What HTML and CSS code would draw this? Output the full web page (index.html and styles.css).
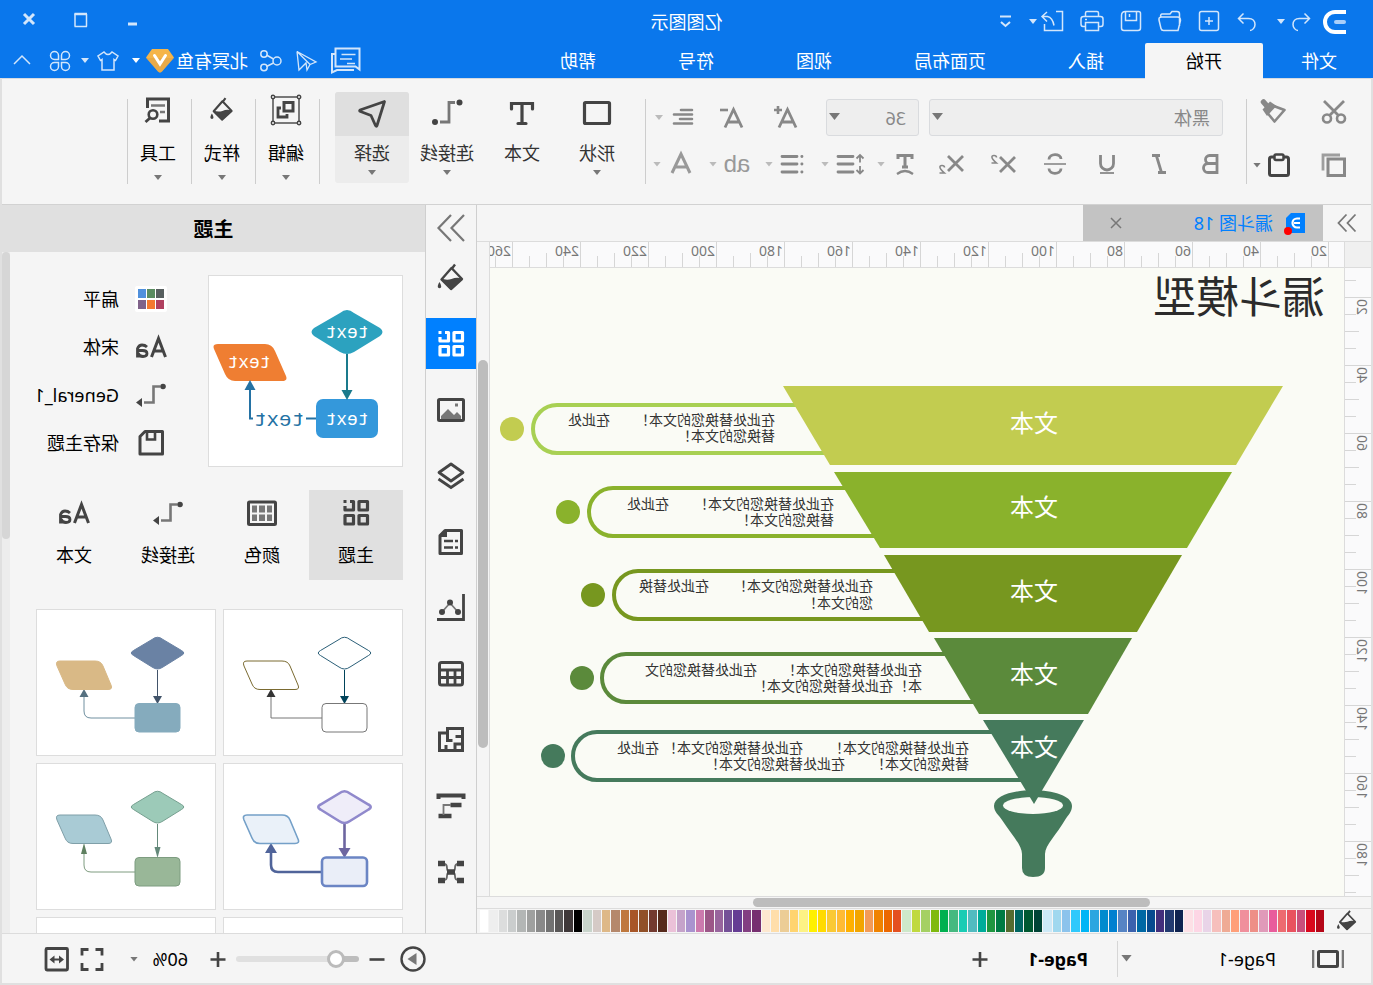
FILE: index.html
```html
<!DOCTYPE html>
<html lang="zh-CN">
<head>
<meta charset="utf-8">
<title>亿图图示</title>
<link rel="stylesheet" href="styles.css">
</head>
<body>
<svg class="sprite" aria-hidden="true">
  <symbol id="logo" viewBox="0 0 32 32"><path d="M5 6H16A10 10 0 0 1 16 26H5" stroke="#fff" stroke-width="4"/><path d="M7 16h8" stroke="#a9cffa" stroke-width="4" stroke-linecap="round"/></symbol>
  <symbol id="undo" viewBox="0 0 32 32"><path d="M12.500 7.500L7.500 12.500l5 5M8 12.500h9.500c4.500 0 6.500 3 6.500 6s-2.500 6-5 6"/></symbol>
  <symbol id="redo" viewBox="0 0 32 32"><path d="M19.500 7.500l5 5-5 5M24 12.500h-9.500c-4.500 0-6.500 3-6.500 6s2.500 6 5 6" transform="translate(1)"/></symbol>
  <symbol id="new" viewBox="0 0 32 32"><rect x="6.500" y="5.500" width="19" height="19" rx="2"/><path d="M16 11v8M12 15h8"/></symbol>
  <symbol id="open" viewBox="0 0 32 32"><path d="M6.500 20V8q0-2.500 2.500-2.500h5l2 2.500h8q1.500 0 1.500 3M8 24.500L5.500 14.500q0-3.500 3-3.500h16q3 0 2.500 3l-2 8.500q-.5 2-2.500 2z"/></symbol>
  <symbol id="save" viewBox="0 0 32 32"><path d="M8.500 5.500h13q4 0 4 4V22q0 2.500-2.500 2.500H9Q6.500 24.500 6.500 22V7.500q0-2 2-2z"/><path d="M10.500 6v8.500h11V6M17.500 8v3"/></symbol>
  <symbol id="print" viewBox="0 0 32 32"><path d="M9.500 20.500H7q-2 0-2-2.500v-5q0-2.500 2.500-2.500h17q2.500 0 2.500 2.500v5q0 2.500-2 2.500h-2.500M9.500 10V7q0-1.500 1.500-1.500h10q1.500 0 1.500 1.500v3M9.500 16.500h13v8h-13zM21 13.500h2"/></symbol>
  <symbol id="export" viewBox="0 0 32 32"><path d="M13 5.500H6.500v19h18V18M26.500 10.500h-5q-5 1-6.500 9M22 6l5 4.500-5 5"/></symbol>
  <symbol id="more" viewBox="0 0 32 32"><path d="M11 10.500h11" stroke-width="2"/><path d="M12 16l4.500 4 4.500-4" stroke-width="2"/></symbol>
  <symbol id="min" viewBox="0 0 32 32"><path d="M12 18h9" stroke-width="3"/></symbol>
  <symbol id="max" viewBox="0 0 32 32"><path d="M10 8h12.500M10 20.500h12.500M10.500 8v12.500M22 8v12.500"/><path d="M10 8h12.500" stroke-width="2.500"/></symbol>
  <symbol id="close" viewBox="0 0 32 32"><path d="M11 8l10 10M21 8l-10 10" stroke-width="3"/></symbol>
  <symbol id="x" viewBox="0 0 32 32"><path d="M11 11l10 10M21 11l-10 10" stroke-width="1.500"/></symbol>
  <symbol id="chat" viewBox="0 0 32 32"><path d="M5.500 3.500H2v18.500h3.500v5l5-3H24v-2.500" stroke="none"/><path d="M2.500 3.500h24v18H10.500H6.500l-4 3zM26.500 9H30V27.500l-5-2.500H8" stroke-width="2"/><path d="M6.500 9.500h14M10 14h12M7 18.500h8" stroke-width="1.600"/></symbol>
  <symbol id="send" viewBox="0 0 32 32"><path d="M25 6.500L6 17l6 2.500zM25 6.500L23 25l-7-7-1 7-3-5.500" stroke-width="1.300"/></symbol>
  <symbol id="share" viewBox="0 0 32 32"><circle cx="10" cy="16" r="4"/><circle cx="23" cy="9" r="3.200"/><circle cx="23" cy="22.500" r="3.200"/><path d="M13.500 14l7-4M13.500 18l7 3.500"/></symbol>
  <symbol id="gem" viewBox="0 0 32 32"><path d="M8 4h16l6 8.500-12 14q-2 2-4 0L2 12.500z" fill="#f5b54a" stroke="none"/><path d="M2 13h28L18 26.500q-2 2-4 0z" fill="#dfa449" stroke="none" opacity=".6"/><path d="M10.500 10.500L16 19l5.500-8.500" stroke="#fff" stroke-width="3" stroke-linecap="round"/></symbol>
  <symbol id="shirt" viewBox="0 0 32 32"><path d="M12 7q4 5 8 0l6 4-2.500 4.500L22 14.500V25H10V14.500l-1.500 1L6 11z"/></symbol>
  <symbol id="clover" viewBox="0 0 32 32"><path d="M14.500 14.500H10.500A4 4 0 1 1 14.500 10.500zM17.500 14.500V10.500A4 4 0 1 1 21.500 14.500zM14.500 17.500V21.500A4 4 0 1 1 10.500 17.500zM17.500 17.500H21.500A4 4 0 1 1 17.500 21.500z"/></symbol>
  <symbol id="up" viewBox="0 0 32 32"><path d="M8 19l8-8 8 8"/></symbol>
  <symbol id="cut" viewBox="0 0 32 32"><path d="M6 5l14.500 14.500M26 5L11.500 19.500" stroke-width="2.800"/><circle cx="9" cy="22.500" r="4" stroke-width="2.600"/><circle cx="23" cy="22.500" r="4" stroke-width="2.600"/></symbol>
  <symbol id="brush" viewBox="0 0 32 32"><path d="M19 9L5.500 14l10 11.500 7-8.500" stroke-width="2.600" stroke-linejoin="round"/><path d="M13.500 10l6.500-4.500 7.500 8L23 20z" fill="currentColor" stroke="none"/><path d="M23 10l3.500-4" stroke-width="5.500" stroke-linecap="round"/></symbol>
  <symbol id="copy" viewBox="0 0 32 32"><path d="M5.500 10h16.500v16.500h-16.500z" stroke-width="3"/><path d="M10 6h17v15.500" stroke-width="2.800" opacity=".8"/></symbol>
  <symbol id="paste" viewBox="0 0 32 32"><rect x="6.500" y="8" width="19" height="18.500" rx="2" stroke-width="3"/><rect x="11.500" y="5.500" width="9" height="5.500" rx="1.500" fill="#f5f5f5" stroke-width="2.500"/></symbol>
  <symbol id="bold" viewBox="0 0 32 32"><path d="M10 7.500h7.500a4 4 0 0 1 0 8H10zM10 15.500h9a4.500 4.500 0 0 1 0 9h-9z" stroke-width="2.800"/></symbol>
  <symbol id="italic" viewBox="0 0 32 32"><path d="M15 7.500h8M9 24.500h8M18.500 8l-5 16.500" stroke-width="2.800"/></symbol>
  <symbol id="under" viewBox="0 0 32 32"><path d="M9.500 7v8.500a6.500 6.500 0 0 0 13 0V7" stroke-width="2.800"/><path d="M9 25h14" stroke-width="1.800"/></symbol>
  <symbol id="strike" viewBox="0 0 32 32"><path d="M22 11.500C22 5 10 5 10 11M10 20.500c0 6.500 12 6.500 12 0" stroke-width="2.800"/><path d="M5 16h22" stroke-width="1.600"/></symbol>
  <symbol id="sup" viewBox="0 0 32 32"><path d="M4 9l15 15M19 9L4 24" stroke-width="2.800"/><path d="M22.500 9.500q0-2 2.500-2t2 2q0 1.500-4.500 5.500h5" stroke-width="1.600"/></symbol>
  <symbol id="sub" viewBox="0 0 32 32"><path d="M4 8l15 15M19 8L4 23" stroke-width="2.800"/><path d="M22.500 19.500q0-2 2.500-2t2 2q0 1.500-4.500 5.500h5" stroke-width="1.600"/></symbol>
  <symbol id="tpath" viewBox="0 0 32 32"><path d="M9 11V7.500h14v3.500M16 8v11M13 19h6" stroke-width="3"/><path d="M8 26q8-6 16 0" stroke-width="2.200"/></symbol>
  <symbol id="lh" viewBox="0 0 32 32"><path d="M5 7.500v7M5 18v7M1.500 10.500L5 7l3.500 3.500M1.500 22L5 25.500 8.500 22" stroke-width="1.800"/><path d="M12 8.500h15M12 16h15M12 24h15" stroke-width="2.800" stroke-linecap="round"/></symbol>
  <symbol id="list" viewBox="0 0 32 32"><path d="M12 8.500h15M12 16h15M12 24h15M7 8.500h.2M7 16h.2M7 24h.2" stroke-width="2.800" stroke-linecap="round"/></symbol>
  <symbol id="align" viewBox="0 0 32 32"><path d="M7 8h11M7 12.500h18M7 17h12M7 21.500h18" stroke-width="2.600" stroke-linecap="round"/></symbol>
  <symbol id="aplus" viewBox="0 0 32 32"><path d="M6 25.500l8.500-18L23 25.500M9 20h11" stroke-width="2.800"/><path d="M20 8h8M24 4v8" stroke-width="2.600"/></symbol>
  <symbol id="aminus" viewBox="0 0 32 32"><path d="M6 25.500l8.500-18L23 25.500M9 20h11" stroke-width="2.800"/><path d="M20 8h8" stroke-width="2.600"/></symbol>
  <symbol id="acolor" viewBox="0 0 32 32"><path d="M7 25L16 6l9 19M10 19h12" stroke-width="3"/></symbol>
  <symbol id="rect" viewBox="0 0 32 32"><rect x="3.500" y="4.500" width="25" height="21" rx="1" stroke-width="3.200"/></symbol>
  <symbol id="text" viewBox="0 0 32 32"><path d="M5.500 11V5.500h21V11M16 5.500V25M12 25.500h8" stroke-width="3.200" stroke-linecap="round"/></symbol>
  <symbol id="link" viewBox="0 0 32 32"><path d="M8 4.500h6v19.500h9" stroke-width="2.800" stroke="#777"/><circle cx="3.500" cy="4.500" r="3" fill="currentColor" stroke="none"/><circle cx="28" cy="24" r="3" fill="currentColor" stroke="none"/></symbol>
  <symbol id="linka" viewBox="0 0 32 32"><path d="M7 7.500h6.500v16H23" stroke-width="2.600" stroke="#777"/><circle cx="4" cy="7.500" r="2.800" fill="currentColor" stroke="none"/><path d="M25 19l6 4.500-6 4.500z" fill="currentColor" stroke="none"/></symbol>
  <symbol id="pick" viewBox="0 0 32 32"><path d="M3.500 3.500l24.500 8.500q1 1-.5 1.500l-10.500 4-4.500 10q-1 1.500-1.500 0z" stroke-width="2.800" stroke-linejoin="round" transform="matrix(1 0 0 1 0 0)"/></symbol>
  <symbol id="group" viewBox="0 0 32 32"><rect x="3" y="3" width="26" height="26" stroke-width="1.400"/><rect x="9" y="8.500" width="9" height="8.500" stroke-width="3"/><path d="M21 14h3v9h-9v-3" stroke-width="2.800"/><g fill="#f5f5f5" stroke-width="1.400"><circle cx="3" cy="3" r="1.700"/><circle cx="29" cy="3" r="1.700"/><circle cx="3" cy="29" r="1.700"/><circle cx="29" cy="29" r="1.700"/></g></symbol>
  <symbol id="bucket" viewBox="0 0 32 32"><path d="M12 2.500l3 4M15.500 6L5 17l11 10 9.500-9.500z" stroke-width="2.400" stroke-linejoin="round"/><path d="M4.500 17q5-2.500 11 0 5 1.500 10.500-.5L16 28z" fill="currentColor" stroke="none"/><path d="M27.500 20q2.500 4 1.500 5.500-1.500 1.500-3 0-.8-1.500 1.500-5.500z" fill="currentColor" stroke="none"/></symbol>
  <symbol id="tools" viewBox="0 0 32 32"><path d="M15 27H5.500V5h21v9" stroke-width="3"/><path d="M9 11.500h14M9 18h5" stroke="#777" stroke-width="2.400"/><circle cx="21" cy="20.500" r="4.300" stroke-width="2.600"/><path d="M24 24l4.500 4" stroke-width="2.800"/></symbol>
  <symbol id="dright" viewBox="0 0 32 32"><path d="M3 3l12.500 13L3 29M16 3l12.500 13L16 29" stroke-width="2.200"/></symbol>
  <symbol id="dnext" viewBox="0 0 32 32"><path d="M7.500 7.500L15.500 16l-8 8.500M16.500 7.500L24.500 16l-8 8.500" stroke-width="1.800"/></symbol>
  <symbol id="grid" viewBox="0 0 32 32"><path d="M4.500 4.500h8.500v8.500h-8.500zM4.500 18.500h8.500v8.500h-8.500zM18.500 18.500h8.500v8.500h-8.500z" stroke-width="3.200" stroke-linejoin="round"/><path d="M22 4.500h-3.500v8.500h8.500V9" stroke-width="3.200" stroke-linejoin="round"/><path d="M25.500 3h3v3h-3z" fill="currentColor" stroke="none"/></symbol>
  <symbol id="image" viewBox="0 0 32 32"><rect x="3.500" y="5.500" width="25" height="21" stroke-width="3" rx="1"/><path d="M6 25l0-3 4-4 3 3 6-6 7 7v3z" fill="#777" stroke="none"/><path d="M9 11h3" stroke-width="3" stroke="#777"/></symbol>
  <symbol id="layers" viewBox="0 0 32 32"><path d="M16 4l12 8.500L16 21 4 12.500z" stroke-width="2.800" stroke-linejoin="round"/><path d="M3.500 19L16 27.500 28.500 19" stroke-width="2.800"/></symbol>
  <symbol id="doc" viewBox="0 0 32 32"><path d="M5.500 4.500H22l5 5v18H5.500z" stroke-width="3" stroke-linejoin="round"/><path d="M20 3l8 8h-8z" fill="currentColor" stroke="none"/><path d="M9 15h3M14 15h9M9 21.500h3M14 21.500h9" stroke-width="2.600"/></symbol>
  <symbol id="chart" viewBox="0 0 32 32"><path d="M3.500 2v25.500H30" stroke-width="2.800"/><path d="M9 20l8-9 8 9" stroke="#777" stroke-width="1.800"/><g fill="currentColor" stroke="none"><circle cx="9" cy="20" r="3"/><circle cx="17" cy="10.500" r="3"/><circle cx="25" cy="20" r="3"/></g></symbol>
  <symbol id="table" viewBox="0 0 32 32"><rect x="4.500" y="4.500" width="23" height="22.500" rx="2" stroke-width="3"/><path d="M5 12h22M5 19.500h22M12 12v14M19.500 12v14" stroke-width="2.800"/></symbol>
  <symbol id="plan" viewBox="0 0 32 32"><path d="M4.500 26.500v-22h15v4.500h8v17.500zM4.500 12.500h7M19.500 9v7.500h-5M4.500 20h7.500v6M21 26v-5" stroke-width="3"/></symbol>
  <symbol id="gantt" viewBox="0 0 32 32"><path d="M3.500 9V5.500h25V9" stroke-width="4"/><path d="M5.500 15h11M15.500 26h13" stroke-width="4.500"/><path d="M16 15h7.500v10" stroke="#777" stroke-width="1.800"/></symbol>
  <symbol id="mind" viewBox="0 0 32 32"><path d="M8 8h1q3 0 3 4t4 4q-4 0-4 4t-3 4H8M24 8h-1q-3 0-3 4t-4 4q4 0 4 4t3 4h1" stroke="#666" stroke-width="1.800"/><path d="M3 7.500h7M3 24.500h7M22 7.500h7M22 24.500h7M12 16h8" stroke-width="5.500"/></symbol>
  <symbol id="aa" viewBox="0 0 32 32"><path d="M1.500 26L8.500 7.500l7 18.500M4 20h9" stroke-width="3"/><path d="M20 16q2-2 5-2t4.500 3.500v9M29 19.500h-4.500q-4.500 0-4.500 3t4 3 5-3.500" stroke-width="2.800"/></symbol>
  <symbol id="theme" viewBox="0 0 32 32"><rect x="0" y="3" width="32" height="26" rx="2" fill="#fff" stroke="none"/><g stroke="none"><path d="M3 6h8v9H3z" fill="#586060"/><path d="M12 6h8v9h-8z" fill="#5a8c60"/><path d="M21 6h8v9h-8z" fill="#5090dc"/><path d="M3 17h8v9H3z" fill="#b04060"/><path d="M12 17h8v9h-8z" fill="#f5792f"/><path d="M21 17h8v9h-8z" fill="#80638a"/></g></symbol>
  <symbol id="disk" viewBox="0 0 32 32"><path d="M4.500 4.500H22l5 5v17.500H4.500z" stroke-width="3" stroke-linejoin="round" transform="matrix(1 0 0 1 0 0)"/><path d="M12 5v7.500h8V5" stroke-width="2.600"/></symbol>
  <symbol id="swatch" viewBox="0 0 32 32"><rect x="2.500" y="5" width="27" height="22.500" stroke-width="3" rx="1"/><path d="M6 8.500h5v7H6zM13 8.500h6v7h-6zM21 8.500h5v7h-5zM6 17.500h5V24H6zM13 17.500h6V24h-6zM21 17.500h5V24h-5z" fill="#777" stroke="none"/></symbol>
  <symbol id="slides" viewBox="0 0 32 32"><rect x="6.500" y="8.500" width="19" height="15" stroke-width="3" rx="1"/><path d="M1 7v18M31 7v18" stroke="#777" stroke-width="2.600"/></symbol>
  <symbol id="plus" viewBox="0 0 32 32"><path d="M16 9v15M8.500 16.500h15" stroke-width="2.600"/></symbol>
  <symbol id="minus" viewBox="0 0 32 32"><path d="M8.500 16.500h15" stroke-width="2.600"/></symbol>
  <symbol id="play" viewBox="0 0 32 32"><circle cx="16" cy="16" r="11.500" stroke-width="2.400"/><path d="M12.500 10v12l9-6z" fill="#777" stroke="none"/></symbol>
  <symbol id="full" viewBox="0 0 32 32"><path d="M6 12.500V6.500h6.500M19.500 6.500H26v6M26 20v6.500h-6.500M12.500 26.500H6V20" stroke-width="2.800"/></symbol>
  <symbol id="fit" viewBox="0 0 32 32"><rect x="5.500" y="5.500" width="21.500" height="21.500" stroke-width="2.800" rx="1"/><path d="M11 16.500h10" stroke-width="2"/><path d="M9 16.500l5-4v8zM23.500 16.500l-5-4v8z" fill="currentColor" stroke="none"/></symbol>
  <symbol id="file" viewBox="0 0 32 32"><path d="M7 6h14l5 5v15H7z" fill="#0080ff" stroke="none"/><path d="M12 11.500h3a4.500 4.500 0 0 1 0 9h-3M12 16h6" stroke="#fff" stroke-width="2.200"/><circle cx="24" cy="24" r="4" fill="#f00" stroke="none"/></symbol>
</svg>

<div class="app">
  <header class="header">
    <div class="titlebar">
      <div class="quick">
        <svg class="ic logo"><use href="#logo"/></svg>
        <span class="split"><button aria-label="撤销"><svg class="ic"><use href="#undo"/></svg></button><button class="dd" aria-label="撤销列表"></button></span>
        <button class="redo" aria-label="恢复"><svg class="ic"><use href="#redo"/></svg></button>
        <button aria-label="新建"><svg class="ic"><use href="#new"/></svg></button>
        <button aria-label="打开"><svg class="ic"><use href="#open"/></svg></button>
        <button aria-label="保存"><svg class="ic"><use href="#save"/></svg></button>
        <button aria-label="打印"><svg class="ic"><use href="#print"/></svg></button>
        <span class="split"><button aria-label="导出"><svg class="ic"><use href="#export"/></svg></button><button class="dd" aria-label="导出格式"></button></span>
        <button aria-label="更多"><svg class="ic"><use href="#more"/></svg></button>
      </div>
      <div class="title">亿图图示</div>
      <div class="winctl">
        <button aria-label="最小化"><svg class="ic"><use href="#min"/></svg></button>
        <button aria-label="最大化"><svg class="ic"><use href="#max"/></svg></button>
        <button aria-label="关闭"><svg class="ic"><use href="#close"/></svg></button>
      </div>
    </div>
    <div class="menubar">
      <nav class="menus">
        <a class="menu first" href="#file">文件</a>
        <a class="menu active" href="#home">开始</a>
        <a class="menu" href="#insert">插入</a>
        <a class="menu" href="#layout">页面布局</a>
        <a class="menu" href="#view">视图</a>
        <a class="menu" href="#symbols">符号</a>
        <a class="menu" href="#help">帮助</a>
      </nav>
      <div class="account">
        <button class="chat" aria-label="消息"><svg class="ic"><use href="#chat"/></svg></button>
        <button class="send" aria-label="发送"><svg class="ic"><use href="#send"/></svg></button>
        <button aria-label="分享"><svg class="ic"><use href="#share"/></svg></button>
        <button class="user">北冥有鱼<svg class="ic"><use href="#gem"/></svg><span class="dd"></span></button>
        <span class="split"><button aria-label="皮肤"><svg class="ic"><use href="#shirt"/></svg></button><button class="dd" aria-label="皮肤列表"></button></span>
        <button aria-label="应用"><svg class="ic"><use href="#clover"/></svg></button>
        <button class="fold" aria-label="收起"><svg class="ic"><use href="#up"/></svg></button>
      </div>
    </div>
  </header>

  <div class="frame">
    <div class="ribbon">
      <div class="clip">
        <button aria-label="剪切"><svg class="ic"><use href="#cut"/></svg></button>
        <button aria-label="格式刷"><svg class="ic"><use href="#brush"/></svg></button>
        <button aria-label="复制"><svg class="ic"><use href="#copy"/></svg></button>
        <span class="split dark"><button aria-label="粘贴"><svg class="ic"><use href="#paste"/></svg></button><button class="dd" aria-label="粘贴选项"></button></span>
      </div>
      <div class="fonts">
        <div class="row top">
          <span class="combo wide"><select aria-label="字体"><option>黑体</option></select></span>
          <span class="combo"><select aria-label="字号"><option>36</option></select></span>
          <button class="grow" aria-label="增大字号"><svg class="ic"><use href="#aplus"/></svg></button>
          <button class="shrink" aria-label="减小字号"><svg class="ic"><use href="#aminus"/></svg></button>
          <span class="split"><button aria-label="对齐"><svg class="ic"><use href="#align"/></svg></button><button class="dd" aria-label="对齐选项"></button></span>
        </div>
        <div class="row">
          <button class="cell" aria-label="加粗"><svg class="ic"><use href="#bold"/></svg></button>
          <button class="cell" aria-label="斜体"><svg class="ic"><use href="#italic"/></svg></button>
          <button class="cell" aria-label="下划线"><svg class="ic"><use href="#under"/></svg></button>
          <button class="cell" aria-label="删除线"><svg class="ic"><use href="#strike"/></svg></button>
          <button class="cell" aria-label="上标"><svg class="ic"><use href="#sup"/></svg></button>
          <button class="cell" aria-label="下标"><svg class="ic"><use href="#sub"/></svg></button>
          <div class="splits">
            <span class="split"><button aria-label="文本路径"><svg class="ic"><use href="#tpath"/></svg></button><button class="dd" aria-label="路径选项"></button></span>
            <span class="split"><button aria-label="行距"><svg class="ic"><use href="#lh"/></svg></button><button class="dd" aria-label="行距选项"></button></span>
            <span class="split"><button aria-label="项目符号"><svg class="ic"><use href="#list"/></svg></button><button class="dd" aria-label="符号选项"></button></span>
            <span class="split"><button class="ab">ab</button><button class="dd" aria-label="大小写选项"></button></span>
            <span class="split pale"><button aria-label="字体颜色"><svg class="ic"><use href="#acolor"/></svg></button><button class="dd" aria-label="颜色选项"></button></span>
          </div>
        </div>
      </div>
      <div class="tools">
        <button class="tool"><span class="pic"><svg class="ic"><use href="#rect"/></svg></span>形状<i class="dd"></i></button>
        <button class="tool"><span class="pic"><svg class="ic"><use href="#text"/></svg></span>文本</button>
        <button class="tool"><span class="pic"><svg class="ic"><use href="#link"/></svg></span>连接线<i class="dd"></i></button>
        <button class="tool on"><span class="pic"><svg class="ic"><use href="#pick"/></svg></span>选择<i class="dd"></i></button>
      </div>
      <div class="extras">
        <button class="extra"><svg class="ic"><use href="#group"/></svg><span>编辑</span><i class="dd"></i></button>
        <button class="extra"><svg class="ic small"><use href="#bucket"/></svg><span>样式</span><i class="dd"></i></button>
        <button class="extra"><svg class="ic"><use href="#tools"/></svg><span>工具</span><i class="dd"></i></button>
      </div>
    </div>

    <div class="body">
      <main class="editor">
        <div class="doctabs">
          <button class="expand" aria-label="展开"><svg class="ic"><use href="#dnext"/></svg></button>
          <div class="doctab"><svg class="ic"><use href="#file"/></svg><span>漏斗图 18</span><button aria-label="关闭标签"><svg class="ic"><use href="#x"/></svg></button></div>
        </div>
        <div class="stage">
          <div class="corner"></div>
          <div class="hruler"><span>20</span><span>40</span><span>60</span><span>80</span><span>100</span><span>120</span><span>140</span><span>160</span><span>180</span><span>200</span><span>220</span><span>240</span><span>260</span></div>
          <div class="gutter"></div>
          <div class="vruler"><span>20</span><span>40</span><span>60</span><span>80</span><span>100</span><span>120</span><span>140</span><span>160</span><span>180</span></div>
          <div class="canvas">
            <svg width="855" height="628" viewBox="29 268 855 628">
              <text class="heading" x="48" y="313">漏斗模型</text>
              <g fill="none" stroke-width="4">
                <path d="M500 405H816a24 24 0 0 1 0 48H500" stroke="#a8d053"/>
                <path d="M470 488H760a24 24 0 0 1 0 48H470" stroke="#8ab22c"/>
                <path d="M420 571H735a24 24 0 0 1 0 48H420" stroke="#77971f"/>
                <path d="M370 654H747a24 24 0 0 1 0 48H370" stroke="#5b8a3b"/>
                <path d="M345 732H776a24 24 0 0 1 0 48H345" stroke="#457a5c"/>
              </g>
              <path d="M301 806C301 785 379 785 379 806C379 812 374 815 371 820C362 834 351 845 351 854V868Q351 877 340 877Q328 877 328 868V854C328 845 316 834 308 820C305 815 301 812 301 806Z" fill="#457a5c"/>
              <ellipse cx="340" cy="805.500" rx="30" ry="8.500" fill="#fafbf5"/>
              <path d="M90 386H590L543 465H137Z" fill="#c2cc50"/>
              <path d="M141 472H539L493 548H186Z" fill="#8ab22c"/>
              <path d="M191 555H489L444 632H236Z" fill="#77971f"/>
              <path d="M241 638H439L394 714H285Z" fill="#5b8a3b"/>
              <path d="M289 720H390L339 804Z" fill="#457a5c"/>
              <circle cx="861" cy="429" r="12" fill="#c2cc50"/>
              <circle cx="805" cy="512" r="12" fill="#8ab22c"/>
              <circle cx="780" cy="595" r="12" fill="#77971f"/>
              <circle cx="791" cy="678" r="12" fill="#5b8a3b"/>
              <circle cx="820" cy="756" r="12" fill="#457a5c"/>
              <g class="level"><text x="339" y="432">文本</text><text x="339" y="516">文本</text><text x="339" y="600">文本</text><text x="339" y="683">文本</text><text x="339" y="756">文本</text></g>
              <g class="note">
                <text x="598" y="425">在此处替换您的文本！</text><text x="763" y="425">在此处</text>
                <text x="598" y="441">替换您的文本！</text>
                <text x="539" y="509">在此处替换您的文本！</text><text x="704" y="509">在此处</text>
                <text x="539" y="525">替换您的文本！</text>
                <text x="500" y="591">在此处替换您的文本！</text><text x="664" y="591">在此处替换</text>
                <text x="500" y="608">您的文本！</text>
                <text x="451" y="675">在此处替换您的文本！</text><text x="616" y="675">在此处替换您的文</text>
                <text x="451" y="691">本！</text><text x="480" y="691">在此处替换您的文本！</text>
                <text x="404" y="753">在此处替换您的文本！</text><text x="570" y="753">在此处替换您的文本！</text><text x="714" y="753">在此处</text>
                <text x="404" y="769">替换您的文本！</text><text x="528" y="769">在此处替换您的文本！</text>
              </g>
            </svg>
          </div>
          <div class="vscroll"><div class="thumb"></div></div>
        </div>
        <div class="hscroll"><div class="thumb"></div></div>
        <div class="palette"><button class="fill" aria-label="填充"><svg class="ic small"><use href="#bucket"/></svg></button><div class="swatches" id="swatches"></div></div>
      </main>

      <aside class="rail">
        <button aria-label="收起面板"><svg class="ic"><use href="#dright"/></svg></button>
        <button aria-label="填充"><svg class="ic"><use href="#bucket"/></svg></button>
        <button class="on" aria-label="主题"><svg class="ic"><use href="#grid"/></svg></button>
        <button aria-label="图片"><svg class="ic"><use href="#image"/></svg></button>
        <button aria-label="图层"><svg class="ic"><use href="#layers"/></svg></button>
        <button aria-label="注释"><svg class="ic"><use href="#doc"/></svg></button>
        <button aria-label="图表"><svg class="ic"><use href="#chart"/></svg></button>
        <button aria-label="表格"><svg class="ic"><use href="#table"/></svg></button>
        <button aria-label="平面图"><svg class="ic"><use href="#plan"/></svg></button>
        <button aria-label="甘特图"><svg class="ic"><use href="#gantt"/></svg></button>
        <button aria-label="思维导图"><svg class="ic"><use href="#mind"/></svg></button>
      </aside>

      <section class="panel">
        <h2>主题</h2>
        <div class="scroller">
          <div class="content">
            <div class="current">
              <div class="preview">
                <svg width="193" height="190" viewBox="0 0 193 190">
                  <path d="M48 37Q55 31 62 37L88 52Q93 56 88 60L62 76Q55 80 48 76L22 60Q17 56 22 52Z" fill="#2ca2bf"/>
                  <rect x="24" y="123" width="62" height="39" rx="7" fill="#3498db"/>
                  <path d="M184 68Q190 68 188 73L177 98Q174 105 167 105H120Q114 105 116 100L127 75Q130 68 137 68Z" fill="#ef7e32"/>
                  <path d="M55 78v38" stroke="#1a7a8c" stroke-width="2"/><path d="M49.500 114h11L55 124z" fill="#1a7a8c"/>
                  <path d="M86 142.500h10M149 142.500h3V110" stroke="#2472a4" stroke-width="2" fill="none"/><path d="M146.500 114h11L152 104z" fill="#2472a4"/>
                  <g class="mono"><text x="55" y="62">text</text><text x="55" y="149">text</text><text x="153" y="92">text</text><text class="big" x="123" y="150">text</text></g>
                </svg>
              </div>
              <ul class="props">
                <li><svg class="ic"><use href="#theme"/></svg>扁平</li>
                <li><svg class="ic"><use href="#aa"/></svg>宋体</li>
                <li><svg class="ic"><use href="#linka"/></svg>General_1</li>
                <li><svg class="ic"><use href="#disk"/></svg>保存主题</li>
              </ul>
            </div>
            <div class="kinds">
              <button class="on"><svg class="ic"><use href="#grid"/></svg>主题</button>
              <button><svg class="ic"><use href="#swatch"/></svg>颜色</button>
              <button><svg class="ic"><use href="#linka"/></svg>连接线</button>
              <button><svg class="ic"><use href="#aa"/></svg>文本</button>
            </div>
            <div class="cards" id="cards"></div>
          </div>
          <div class="pscroll"><div class="thumb"></div></div>
        </div>
      </section>
    </div>

    <footer class="status">
      <div class="pages">
        <button aria-label="幻灯片"><svg class="ic"><use href="#slides"/></svg></button>
        <span class="pick"><select aria-label="页面"><option>Page-1</option></select></span>
        <a class="page" href="#page1">Page-1</a>
        <button aria-label="添加页面"><svg class="ic"><use href="#plus"/></svg></button>
      </div>
      <div class="zoom">
        <button aria-label="播放"><svg class="ic"><use href="#play"/></svg></button>
        <button class="step" aria-label="缩小"><svg class="ic"><use href="#minus"/></svg></button>
        <input type="range" min="0" max="100" value="13" aria-label="缩放">
        <button class="step" aria-label="放大"><svg class="ic"><use href="#plus"/></svg></button>
        <span class="level-pick"><select aria-label="缩放比例"><option>60%</option></select></span>
        <button aria-label="全屏"><svg class="ic"><use href="#full"/></svg></button>
        <button aria-label="适合宽度"><svg class="ic"><use href="#fit"/></svg></button>
      </div>
    </footer>
  </div>
</div>
<script src="app.js"></script>
</body>
</html>
```
FILE: styles.css
```css
* { box-sizing: border-box; }
body {
  margin: 0;
  background: #f5f5f5;
  font-family: "Noto Sans", "Noto Sans CJK SC", sans-serif;
  font-size: 18px;
  line-height: 24px;
  color: #000;
}
button, select, input {
  font: inherit;
  color: inherit;
  background: none;
  border: 0;
  padding: 0;
  margin: 0;
  border-radius: 0;
  appearance: none;
}
button { display: flex; align-items: center; justify-content: center; flex: none; }
a { color: inherit; text-decoration: none; }
.sprite { display: none; }
.ic { width: 32px; height: 32px; flex: none; display: block; fill: none; stroke: currentColor; stroke-width: 1.5; }
.ic.small { width: 28px; height: 28px; }
.dd { flex: none; width: 8px; height: 5px; background: currentColor; clip-path: polygon(0 0, 100% 0, 50% 100%); display: block; }
.split { display: flex; align-items: center; flex: none; }

/* The whole window is shown flipped left to right. */
.app { height: 100vh; display: flex; flex-direction: column; transform: scaleX(-1); overflow: hidden; }

.header { background: #0a77ec; color: #d3e6fb; flex: none; }
.titlebar { height: 43px; display: grid; grid-template-columns: 1fr auto 1fr; align-items: center; }
.quick { display: flex; align-items: center; gap: 7px; padding-left: 22px; }
.logo { margin-right: -5px; }
.redo { margin-left: 6px; }
.title { color: #fff; }
.winctl { display: flex; justify-content: flex-end; gap: 20px; padding-right: 13px; }
.menubar { height: 35px; display: flex; justify-content: space-between; }
.menus { display: flex; color: #fff; }
.menu { padding: 0 41px; line-height: 36px; border-radius: 2px 2px 0 0; }
.menu.first { padding: 0 38px 0 36px; }
.menu.active { background: #f5f5f5; color: #000; height: 36px; z-index: 1; }
.account { display: flex; align-items: center; padding-right: 6px; }
.chat { margin-right: 8px; }
.send { margin-right: 3px; }
.user { color: #fff; margin-left: 7px; }
.user .dd { margin-left: 4px; }
.account .split { margin: 0 4px 0 8px; gap: 3px; }
.account .split + button { margin-left: 1px; }
.account .fold { margin-left: 6px; }

.frame { flex: 1; min-height: 0; display: flex; flex-direction: column; border: solid #e0e0e0; border-width: 0 2px 2px; background: #f5f5f5; }

.ribbon { height: 127px; flex: none; display: flex; padding-top: 14px; border-top: 1px solid #d6dbe2; border-bottom: 1px solid #d2d2d2; color: #888; }
.clip { display: grid; grid-template: 26px 32px / 60px 44px; row-gap: 24px; align-items: center; justify-items: start; align-content: start; padding-left: 21px; width: 125px; height: 85px; margin-top: 6px; border-right: 1px solid #cdcdcd; flex: none; }
.clip .split { gap: 2px; margin-left: -5px; }
.clip .dd { background: #777; }
.dark { color: #444; }
.fonts { width: 601px; height: 85px; margin-top: 6px; padding-left: 9px; border-right: 1px solid #cdcdcd; flex: none; }
.row { display: flex; align-items: center; height: 60px; }
.row + .row { margin-top: -2px; }
.row.top { height: 37px; padding-left: 14px; }
.combo { width: 93px; height: 37px; position: relative; border: 1px solid #d9dbde; border-radius: 3px; background: #eeeeee; margin-right: 24px; }
.combo.wide { width: 294px; margin-right: 10px; }
.combo select { width: 100%; height: 100%; padding: 0 12px; }
.combo::after, .pick::after, .level-pick::after { content: ""; position: absolute; pointer-events: none; background: #777; clip-path: polygon(0 0, 100% 0, 50% 100%); }
.combo::after { right: 2px; top: 13px; width: 11px; height: 7px; }
.grow { margin-right: 22px; }
.shrink { margin-right: 17px; }
.fonts .split { gap: 4px; }
.fonts .split .dd { background: #bbb; }
.pale { color: #999; }
.cell { width: 52px; }
.splits { display: flex; gap: 12px; padding-left: 4px; }
.ab { width: 32px; font-size: 24px; line-height: 32px; color: #999; font-family: "Liberation Sans", Arial, sans-serif; }
.tools { display: flex; gap: 1px; padding-left: 11px; width: 325px; color: #333; flex: none; margin-top: -1px; }
.tool { width: 74px; height: 91px; flex-direction: column; justify-content: flex-start; border-radius: 3px; white-space: nowrap; }
.pic { width: 100%; height: 44px; display: flex; align-items: center; justify-content: center; margin-bottom: 5px; color: #444; }
.tool .dd, .extra .dd { background: #777; margin-top: 5px; }
.tool.on { background: #ececec; }
.tool.on .pic { background: #dfdfdf; border-radius: 3px 3px 0 0; }
.extras { display: flex; height: 85px; margin-top: 6px; border-left: 1px solid #cdcdcd; }
.extra { width: 64px; height: 85px; padding-left: 3px; flex-direction: column; justify-content: flex-start; border-right: 1px solid #cdcdcd; color: #000; }
.extra .ic { color: #444; margin-top: -5px; }
.extra .ic.small { margin: -3px 0 2px; }
.extra span { margin-top: 15px; }
.extra .dd { margin-top: 10px; }

.body { flex: 1; min-height: 0; display: flex; }
.editor { flex: 1; min-width: 0; display: flex; flex-direction: column; }
.doctabs { height: 37px; flex: none; display: flex; border-bottom: 1px solid #dcdcdc; }
.expand { width: 48px; color: #777; }
.doctab { width: 240px; background: #c3c3c3; color: #0080ff; display: flex; align-items: center; padding: 0 17px 0 11px; }
.doctab span { flex: 1; padding-left: 7px; }
.doctab button { color: #777; }
.stage { flex: 1; min-height: 0; display: grid; grid-template: 26px 1fr / 27px 1fr 13px; }
.corner { background: #f0f0f0; border: solid #dcdcdc; border-width: 0 1px 1px 0; }
.hruler, .vruler { background-color: #fafafb; font-size: 14px; color: #777; overflow: hidden; display: flex; }
.hruler {
  border-bottom: 1px solid #dcdcdc;
  background-image: linear-gradient(90deg, #d6d6d6 1px, transparent 1px), linear-gradient(90deg, #d6d6d6 1px, transparent 1px), linear-gradient(90deg, #d6d6d6 1px, transparent 1px);
  background-size: 68px 25px, 68px 14px, 34px 11px;
  background-position: 15px 0, 49px 100%, 32px 100%;
  background-repeat: repeat-x;
  padding-left: 15px;
}
.hruler span { flex: none; width: 68px; padding-left: 2px; line-height: 18px; }
.vruler {
  border-right: 1px solid #dcdcdc;
  background-image: linear-gradient(#d6d6d6 1px, transparent 1px), linear-gradient(#d6d6d6 1px, transparent 1px), linear-gradient(#d6d6d6 1px, transparent 1px);
  background-size: 26px 68px, 14px 68px, 11px 34px;
  background-position: 0 29px, 100% 63px, 100% 12px;
  background-repeat: repeat-y;
  padding-top: 29px;
  flex-direction: column;
}
.vruler span { flex: none; height: 68px; width: 18px; line-height: 18px; writing-mode: vertical-rl; transform: rotate(180deg); text-align: end; padding-bottom: 2px; }
.gutter { border-left: 1px solid #dcdcdc; }
.canvas { background: #fafbf5; overflow: hidden; min-height: 0; }
.canvas svg { display: block; }
.heading { font-size: 43px; fill: #2b2b2b; }
.level { font-size: 24px; fill: #fff; text-anchor: middle; }
.note { font-size: 14px; fill: #333; }
.vscroll { border-left: 1px solid #dcdcdc; padding: 92px 1px 0; }
.thumb { background: #bdbdbd; border-radius: 5px; }
.vscroll .thumb { height: 388px; width: 10px; }
.hscroll { height: 13px; flex: none; border: solid #dcdcdc; border-width: 1px 0; padding: 1px 0 0 221px; }
.hscroll .thumb { width: 397px; height: 9px; }
.palette { height: 25px; flex: none; display: flex; align-items: center; border-bottom: 1px solid #dcdcdc; color: #444; }
.palette .fill { width: 47px; }
.palette .small { width: 24px; height: 24px; }
.swatches { flex: 1; display: flex; gap: 1px; height: 22px; padding-right: 3px; }
.swatches i { flex: 1; }

.rail { width: 52px; flex: none; border: solid #cfcfcf; border-width: 0 1px; display: flex; flex-direction: column; gap: 15px; color: #444; border-bottom: 1px solid #dcdcdc; }
.rail button { height: 51px; }
.rail button:first-child { height: 46px; color: #777; margin-bottom: -14px; }
.rail .on { background: #0080ff; color: #fff; }

.panel { width: 423px; flex: none; display: flex; flex-direction: column; border-bottom: 1px solid #dcdcdc; }
.panel h2 { margin: 0; height: 47px; line-height: 49px; font-size: 20px; font-weight: 700; background: #e0e0e0; text-align: center; flex: none; }
.scroller { flex: 1; min-height: 0; display: flex; }
.content { flex: 1; min-width: 0; padding: 23px 26px 0 22px; overflow: hidden; }
.current { display: flex; }
.preview { width: 195px; height: 192px; background: #fff; border: 1px solid #ddd; flex: none; }
.preview svg { display: block; }
.mono { font-family: "Liberation Mono", monospace; font-size: 18px; fill: #fff; text-anchor: middle; }
.mono .big { font-size: 21px; fill: #2472a4; }
.props { list-style: none; margin: 0; padding: 8px 0 0 41px; display: flex; flex-direction: column; gap: 16px; }
.props li { display: flex; align-items: center; gap: 16px; height: 32px; white-space: nowrap; }
.props .ic { color: #444; }
.kinds { display: flex; margin: 23px -9px 29px 0; }
.kinds button { width: 94px; height: 90px; flex-direction: column; justify-content: flex-start; padding-top: 7px; gap: 14px; white-space: nowrap; }
.kinds .ic { color: #444; }
.kinds .on { background: #e0e0e0; }
.cards { display: grid; grid-template-columns: 180px 180px; gap: 7px; }
.card { height: 147px; background: #fff; border: 1px solid #ddd; }
.card svg { display: block; }
.pscroll { width: 8px; flex: none; background: #ededed; }
.pscroll .thumb { height: 287px; background: #d6d6d6; border-radius: 4px; }

.status { height: 49px; flex: none; display: flex; justify-content: space-between; align-items: center; color: #444; }
.pages, .zoom { display: flex; align-items: center; }
.pages { padding-left: 27px; color: #444; }
.pick { position: relative; width: 159px; margin-left: 36px; height: 36px; border-right: 1px solid #d6d6d6; color: #000; }
.pick select { width: 100%; height: 36px; }
.pick::after { right: 3px; top: 14px; width: 11px; height: 7px; }
.page { color: #000; font-weight: 700; margin: 0 32px 0 29px; }
.zoom { padding-right: 39px; }
.zoom .step { width: 32px; }
.zoom > button:first-child { margin-right: 4px; }
.zoom input { width: 123px; height: 18px; margin: 0 2px; }
.zoom input::-webkit-slider-runnable-track { height: 6px; border-radius: 3px; background: linear-gradient(90deg, #bdbdbd 18%, #e0e0e0 18%); }
.zoom input::-webkit-slider-thumb { appearance: none; width: 18px; height: 18px; margin-top: -6px; border: 3px solid #bbb; border-radius: 50%; background: #fff; }
.level-pick { position: relative; width: 58px; margin: 0 22px 0 14px; color: #000; }
.level-pick select { width: 100%; height: 36px; }
.level-pick::after { right: 0; top: 16px; width: 8px; height: 5px; }
.zoom > button:last-child { margin-left: 3px; }
```
FILE: app.js
```js
const colors = `b50618 d9081c c94f7a e9525f ed6b70 e95c9c e09ab9 ee8f87 f08f9c ff9f79 efab95 f6bfbc e9d4e8 fdd6e5 fde0e6
0f2350 223a70 432f7c 074a8f 0068a5 3c62ae 5684c4 0080d0 018bce 2ba6e0 00b5f5 30c9fc 8cc3ec a0d8ef cde9f7
004336 005831 006560 556b2f 007b43 1f9640 00ac9a 52bbc0 1accb4 46b980 00b050 7fb90f a5d063 c0d93f cee8ca
e45020 ec6800 f08300 f39b57 f2a500 ffb000 ffbb35 fac934 ffda00 fff000 fdf284 ffd46f eccd96 ffdeaa fde8d0
762f70 833f82 653d94 745097 98659d 9c5788 cc7aae a993cf c5a3ca ebc1d8 562a1c 733a30 915028 a85628 bf783e
b5886c deb887 d5cac6 c8d4cb 000000 3f3839 595757 727272 898989 9fa09f b3b6b5 cacdcd dcdddd eeeeee ffffff`.split(/\s+/);
document.getElementById('swatches').innerHTML = colors.map(c => `<i style="background:#${c}"></i>`).join('');

// d: diamond, r: rectangle, p: parallelogram, each [fill, stroke]; w: line width; bend: rounded connector
const themes = [
  { d: ['#fff', '#2b5f78'], r: ['#fff', '#777'], p: ['#fff', '#7a6a30'], down: '#00435a', up: '#333', line: '#777', w: 1 },
  { d: ['#6a82a4', '#6a82a4'], r: ['#85abbd', '#85abbd'], p: ['#d9b986', '#d9b986'], down: '#42546a', up: '#557080', line: '#7090a0', w: 1, bend: 1 },
  { d: ['#efedf9', '#9089cc'], r: ['#eaeef8', '#6b85c4'], p: ['#eaf1f9', '#74a0c8'], down: '#6d66a0', up: '#50649a', line: '#50649a', w: 2.6, bend: 1 },
  { d: ['#9ccab8', '#76a090'], r: ['#99b798', '#7d9c80'], p: ['#a9cbd5', '#7f9fa8'], down: '#64897a', up: '#5f8060', line: '#7f9c80', w: 1, bend: 1, thin: 1 }
];
const card = t => {
  const h = t.thin ? 3 : t.w > 2 ? 6 : 4.5, l = t.thin ? 11 : t.w > 2 ? 10 : 8;
  const pw = t.w > 2 ? 1.6 : 1;
  return `<div class="card"><svg width="178" height="145" viewBox="0 0 178 145" fill="none">
<path d="M57.500 60V90" stroke="${t.down}" stroke-width="${t.w}"/>
<path d="M${57.5 - h} ${94 - l}h${h * 2}L57.500 94z" fill="${t.down}"/>
<path d="${t.bend ? 'M80 108H124Q131 108 131 101V84' : 'M80 108H131V84'}" stroke="${t.line}" stroke-width="${t.w}"/>
<path d="M${131 - h} ${79 + l}h${h * 2}L131 79z" fill="${t.up}"/>
<path d="M52 29.500Q57.500 25 63 29.500L81.500 40.500Q86 43 81.500 45.500L63 57Q57.500 61 52 57L33.500 45.500Q29 43 33.500 40.500Z" fill="${t.d[0]}" stroke="${t.d[1]}" stroke-width="${t.w}"/>
<rect x="35" y="93.500" width="45" height="28.500" rx="4" fill="${t.r[0]}" stroke="${t.r[1]}" stroke-width="${t.w}"/>
<path d="M155 51Q160 51 158 56L150 74Q148 79.500 142 79.500H107Q102 79.500 104 75L112 56Q114 51 120 51Z" fill="${t.p[0]}" stroke="${t.p[1]}" stroke-width="${pw}"/>
</svg></div>`;
};
document.getElementById('cards').innerHTML = themes.map(card).join('') + '<div class="card"></div><div class="card"></div>';
```
